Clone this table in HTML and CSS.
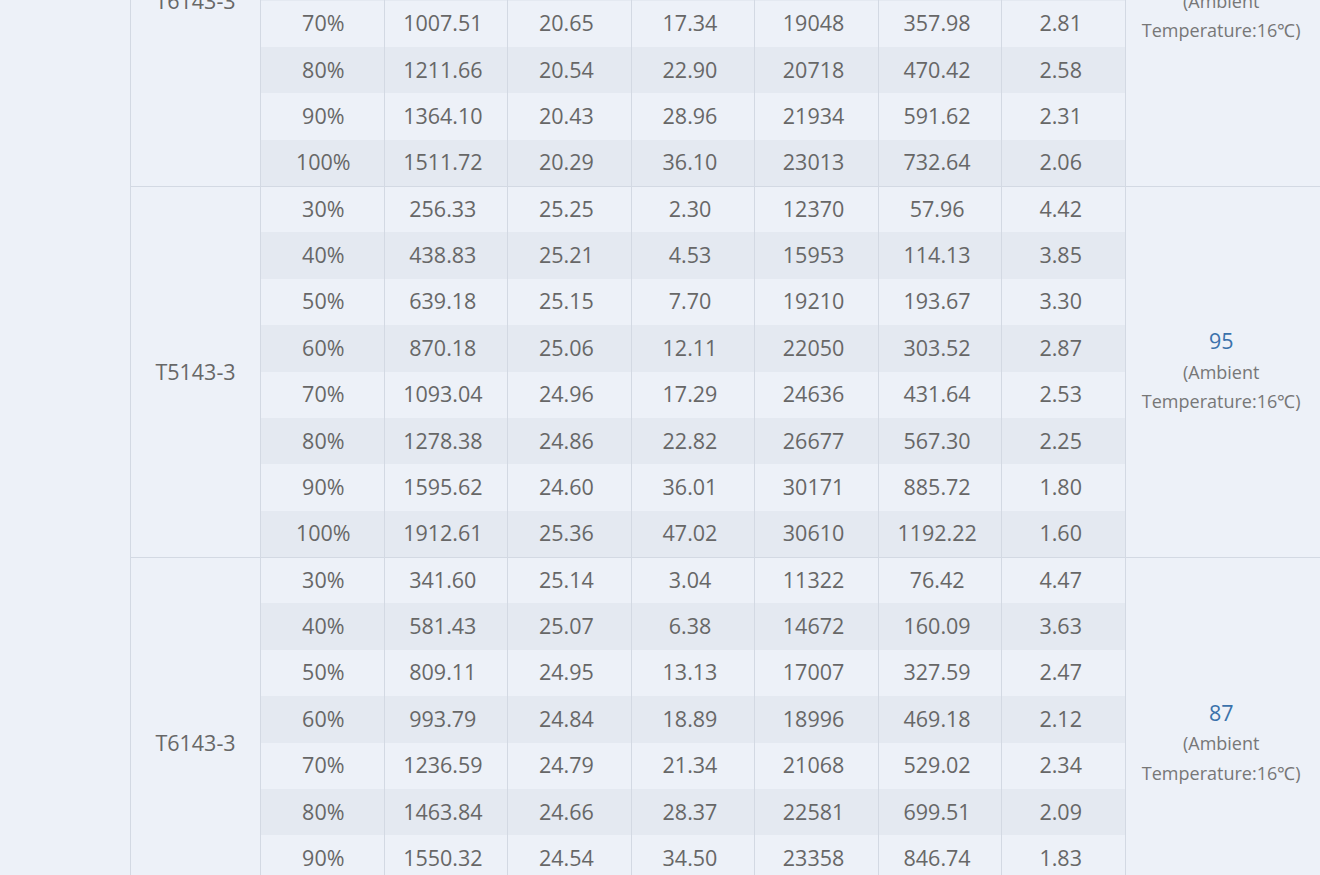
FILE: index.html
```html
<!DOCTYPE html>
<html>
<head>
<meta charset="utf-8">
<link rel="stylesheet" href="styles.css">
</head>
<body>
<div class="viewport">
<table class="perf">
<colgroup>
<col class="c-model"><col class="c-d"><col class="c-d"><col class="c-d"><col class="c-d"><col class="c-d"><col class="c-d"><col class="c-d"><col class="c-last">
</colgroup>
<tbody class="grp">
<tr><td class="model" rowspan="8">T6143-3</td><td class="pct">30%</td><td>301.25</td><td>20.98</td><td>2.85</td><td>11206</td><td>70.14</td><td>4.29</td><td class="last" rowspan="8"><span class="val">84</span><br>(Ambient<br>Temperature:16℃)</td></tr>
<tr><td class="pct">40%</td><td>498.60</td><td>20.91</td><td>5.72</td><td>13574</td><td>140.36</td><td>3.55</td></tr>
<tr><td class="pct">50%</td><td>682.34</td><td>20.83</td><td>9.48</td><td>15620</td><td>210.77</td><td>3.24</td></tr>
<tr><td class="pct">60%</td><td>850.92</td><td>20.74</td><td>13.26</td><td>17411</td><td>281.05</td><td>3.03</td></tr>
<tr><td class="pct">70%</td><td>1007.51</td><td>20.65</td><td>17.34</td><td>19048</td><td>357.98</td><td>2.81</td></tr>
<tr><td class="pct">80%</td><td>1211.66</td><td>20.54</td><td>22.90</td><td>20718</td><td>470.42</td><td>2.58</td></tr>
<tr><td class="pct">90%</td><td>1364.10</td><td>20.43</td><td>28.96</td><td>21934</td><td>591.62</td><td>2.31</td></tr>
<tr><td class="pct">100%</td><td>1511.72</td><td>20.29</td><td>36.10</td><td>23013</td><td>732.64</td><td>2.06</td></tr>
</tbody>
<tbody class="grp">
<tr><td class="model" rowspan="8">T5143-3</td><td class="pct">30%</td><td>256.33</td><td>25.25</td><td>2.30</td><td>12370</td><td>57.96</td><td>4.42</td><td class="last" rowspan="8"><span class="val">95</span><br>(Ambient<br>Temperature:16℃)</td></tr>
<tr><td class="pct">40%</td><td>438.83</td><td>25.21</td><td>4.53</td><td>15953</td><td>114.13</td><td>3.85</td></tr>
<tr><td class="pct">50%</td><td>639.18</td><td>25.15</td><td>7.70</td><td>19210</td><td>193.67</td><td>3.30</td></tr>
<tr><td class="pct">60%</td><td>870.18</td><td>25.06</td><td>12.11</td><td>22050</td><td>303.52</td><td>2.87</td></tr>
<tr><td class="pct">70%</td><td>1093.04</td><td>24.96</td><td>17.29</td><td>24636</td><td>431.64</td><td>2.53</td></tr>
<tr><td class="pct">80%</td><td>1278.38</td><td>24.86</td><td>22.82</td><td>26677</td><td>567.30</td><td>2.25</td></tr>
<tr><td class="pct">90%</td><td>1595.62</td><td>24.60</td><td>36.01</td><td>30171</td><td>885.72</td><td>1.80</td></tr>
<tr><td class="pct">100%</td><td>1912.61</td><td>25.36</td><td>47.02</td><td>30610</td><td>1192.22</td><td>1.60</td></tr>
</tbody>
<tbody class="grp">
<tr><td class="model" rowspan="8">T6143-3</td><td class="pct">30%</td><td>341.60</td><td>25.14</td><td>3.04</td><td>11322</td><td>76.42</td><td>4.47</td><td class="last" rowspan="8"><span class="val">87</span><br>(Ambient<br>Temperature:16℃)</td></tr>
<tr><td class="pct">40%</td><td>581.43</td><td>25.07</td><td>6.38</td><td>14672</td><td>160.09</td><td>3.63</td></tr>
<tr><td class="pct">50%</td><td>809.11</td><td>24.95</td><td>13.13</td><td>17007</td><td>327.59</td><td>2.47</td></tr>
<tr><td class="pct">60%</td><td>993.79</td><td>24.84</td><td>18.89</td><td>18996</td><td>469.18</td><td>2.12</td></tr>
<tr><td class="pct">70%</td><td>1236.59</td><td>24.79</td><td>21.34</td><td>21068</td><td>529.02</td><td>2.34</td></tr>
<tr><td class="pct">80%</td><td>1463.84</td><td>24.66</td><td>28.37</td><td>22581</td><td>699.51</td><td>2.09</td></tr>
<tr><td class="pct">90%</td><td>1550.32</td><td>24.54</td><td>34.50</td><td>23358</td><td>846.74</td><td>1.83</td></tr>
<tr><td class="pct">100%</td><td>1802.47</td><td>24.41</td><td>43.16</td><td>24105</td><td>1051.93</td><td>1.71</td></tr>
</tbody>
</table>
</div>
</body>
</html>
```
FILE: styles.css
```css
html, body {
  margin: 0;
  padding: 0;
  background: #edf1f8;
  overflow: hidden;
}
.viewport {
  width: 1320px;
  height: 875px;
  overflow: hidden;
}
.perf {
  margin-top: -185.5px;
  margin-left: 130px;
  border-collapse: collapse;
  table-layout: fixed;
  width: 1190px;
  font-family: "Open Sans", "Liberation Sans", sans-serif;
  font-size: 21.5px;
  color: #676767;
}
.c-model { width: 130px; }
.c-d { width: 123.57px; }
.c-last { width: 195px; }
.perf tr {
  height: 46.375px;
}
.perf td {
  padding: 0 6px 2px 0;
  text-align: center;
  vertical-align: middle;
  border-left: 1px solid #d3d9e3;
  white-space: nowrap;
}
.perf td.pct {
  padding: 0 0 2px 2px;
}
.perf td.model {
  padding: 0;
}
.grp {
  border-top: 1px solid #d3d9e3;
}
.grp tr:nth-child(even) td {
  background: #e4e9f1;
}
.perf td.model,
.perf td.last,
.grp tr:nth-child(even) td.model,
.grp tr:nth-child(even) td.last {
  background: #edf1f8;
}
.perf td.last {
  padding: 0 4px 0 0;
  font-size: 18px;
  line-height: 29.5px;
  color: #777;
}
.val {
  font-size: 21.5px;
  color: #3b72ab;
}
```
